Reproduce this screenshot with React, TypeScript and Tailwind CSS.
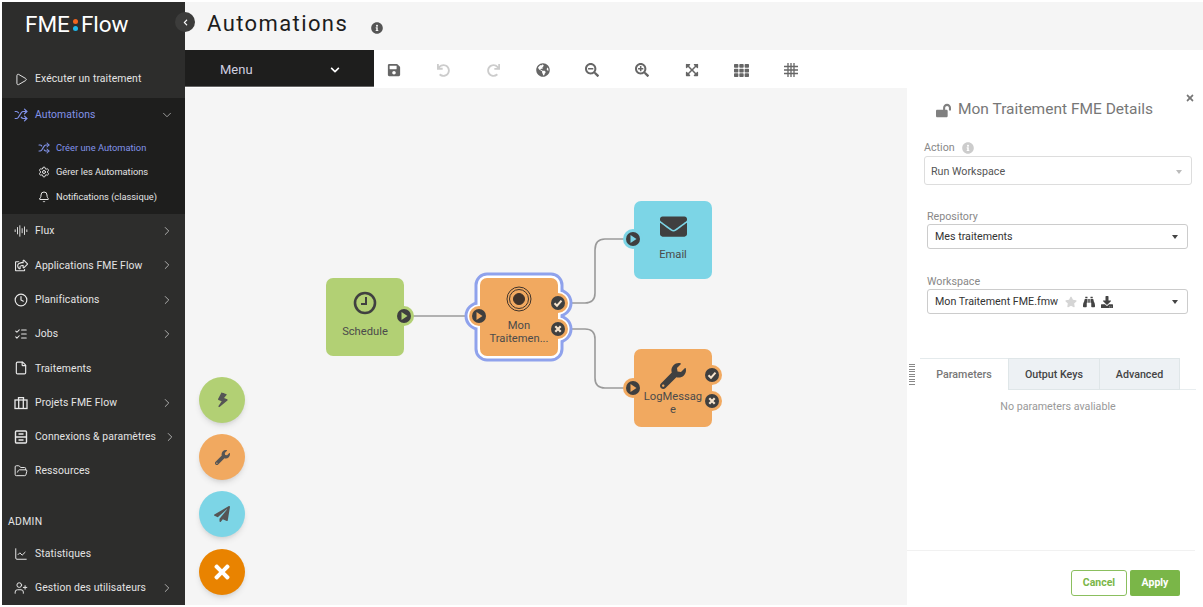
import type { ReactNode } from "react";
import {
  AudioLines,
  Bell,
  ChartLine,
  ChevronDown,
  ChevronRight,
  Clock,
  File,
  FolderOpen,
  ListChecks,
  Play,
  Settings,
  Shuffle,
  UserPlus,
} from "lucide-react";
import {
  FaBinoculars,
  FaBolt,
  FaChevronDown,
  FaChevronLeft,
  FaDownload,
  FaEnvelope,
  FaExpandArrowsAlt,
  FaGlobeAmericas,
  FaInfoCircle,
  FaLockOpen,
  FaPaperPlane,
  FaRedo,
  FaRegShareSquare,
  FaSave,
  FaSearchMinus,
  FaSearchPlus,
  FaStar,
  FaTh,
  FaTimes,
  FaUndo,
  FaWrench,
} from "react-icons/fa";

function DrawersIcon() {
  return (
    <svg width="14" height="14" viewBox="0 0 14 14" fill="none" stroke="currentColor" strokeWidth="1.4">
      <rect x="1.5" y="1" width="11" height="12" rx="1" />
      <path d="M1.5 7h11M4.5 4h5M4.5 10h5" />
    </svg>
  );
}

function ProjectsIcon() {
  return (
    <svg width="14" height="14" viewBox="0 0 14 14" fill="none" stroke="currentColor" strokeWidth="1.3">
      <rect x="1" y="4" width="12" height="8.5" />
      <path d="M4.5 4V1.7h5V4M4.7 4v8.5M9.3 4v8.5" />
    </svg>
  );
}

function GridLinesIcon() {
  return (
    <svg width="16" height="16" viewBox="0 0 16 16" stroke="#666" strokeWidth="1.3" fill="none">
      <path d="M5 1v14M8 1v14M11 1v14M1 4.5h14M1 8h14M1 11.5h14" />
    </svg>
  );
}

type NavItem = {
  label: string;
  icon: ReactNode;
  arrow?: boolean;
};

const topItems: NavItem[] = [
  { label: "Flux", icon: <AudioLines size={14} strokeWidth={1.6} />, arrow: true },
  { label: "Applications FME Flow", icon: <FaRegShareSquare size={13} />, arrow: true },
  { label: "Planifications", icon: <Clock size={14} strokeWidth={2} />, arrow: true },
  { label: "Jobs", icon: <ListChecks size={14} strokeWidth={1.8} />, arrow: true },
  { label: "Traitements", icon: <File size={14} strokeWidth={2} /> },
  { label: "Projets FME Flow", icon: <ProjectsIcon />, arrow: true },
  { label: "Connexions & paramètres", icon: <DrawersIcon />, arrow: true },
  { label: "Ressources", icon: <FolderOpen size={14} strokeWidth={1.7} /> },
];

const adminItems: NavItem[] = [
  { label: "Statistiques", icon: <ChartLine size={14} strokeWidth={1.7} /> },
  { label: "Gestion des utilisateurs", icon: <UserPlus size={14} strokeWidth={1.7} />, arrow: true },
];

function NavRow({ item }: { item: NavItem }) {
  return (
    <div className="flex h-[34.3px] items-center gap-[7px] pl-[12px] pr-[11px] text-[10.4px] tracking-[0.1px] text-[#e4e4e4]">
      <span className="flex w-[14px] shrink-0 justify-center text-[#e8e8e8]">{item.icon}</span>
      <span className="whitespace-nowrap">{item.label}</span>
      {item.arrow && <ChevronRight size={14} strokeWidth={1.6} className="ml-auto shrink-0 text-[#b5b5b5]" />}
    </div>
  );
}

function Sidebar() {
  return (
    <aside className="relative flex w-[183px] shrink-0 flex-col bg-[#2d2d2c]">
      <div className="flex h-[44px] items-center pl-[23px] pt-[2px] text-[22.5px] font-normal leading-none text-white">
        <span>FME</span>
        <span className="mx-[3px] flex flex-col gap-[2px]">
          <span className="h-[5px] w-[5px] rounded-full bg-[#f0641e]" />
          <span className="h-[5px] w-[5px] rounded-full bg-[#1fb6e8]" />
        </span>
        <span>Flow</span>
      </div>
      <div className="mt-[17px]">
        <div className="flex h-[36px] items-center gap-[7px] pb-[2px] pl-[12px] text-[10.4px] tracking-[0.1px] text-[#e4e4e4]">
          <span className="flex w-[14px] justify-center">
            <Play size={15} strokeWidth={1.7} />
          </span>
          Exécuter un traitement
        </div>
        <div className="bg-[#1e1e1d] pb-[5px]">
          <div className="mb-[4.5px] flex h-[33px] items-center gap-[7px] pl-[12px] pr-[11px] text-[10.4px] tracking-[0.1px] text-[#8293ea]">
            <span className="flex w-[14px] justify-center">
              <Shuffle size={14} strokeWidth={2.1} />
            </span>
            Automations
            <ChevronDown size={14} strokeWidth={1.5} className="ml-auto text-[#aaa]" />
          </div>
          <div className="flex h-[24.5px] items-center gap-[6px] pl-[36px] text-[9.3px] text-[#8293ea]">
            <Shuffle size={12} strokeWidth={2.1} />
            Créer une Automation
          </div>
          <div className="flex h-[24.5px] items-center gap-[6px] pl-[36px] text-[9.3px] text-[#e4e4e4]">
            <Settings size={12} strokeWidth={2} />
            Gérer les Automations
          </div>
          <div className="flex h-[24.5px] items-center gap-[6px] pl-[36px] text-[9.3px] text-[#e4e4e4]">
            <Bell size={12} strokeWidth={2} />
            Notifications (classique)
          </div>
        </div>
        {topItems.map((item) => (
          <NavRow key={item.label} item={item} />
        ))}
        <div className="mb-[7px] ml-[6px] mt-[27px] h-[14px] text-[10.4px] leading-[14px] tracking-[0.3px] text-[#e4e4e4]">
          ADMIN
        </div>
        {adminItems.map((item) => (
          <NavRow key={item.label} item={item} />
        ))}
      </div>
      <button className="absolute right-[-10px] top-[10px] z-10 flex h-[20px] w-[20px] items-center justify-center rounded-full bg-[#3c3c3b] text-white">
        <FaChevronLeft size={7} />
      </button>
    </aside>
  );
}

function Toolbar() {
  return (
    <div className="flex h-[38px] bg-white">
      <div className="flex h-[37px] w-[189px] items-center justify-between border-b border-[#666] bg-[#1e1e1d] pl-[35px] pr-[34px] pt-[3px] text-[13px] text-[#cfcfe0]">
        Menu
        <FaChevronDown size={10} className="text-white" />
      </div>
      <div className="flex h-[37px] items-center gap-[33.6px] pl-[12px] pt-[3px] text-[#666]">
        <span className="flex w-[16px] justify-center"><FaSave size={14} /></span>
        <span className="flex w-[16px] justify-center text-[#ccc]"><FaUndo size={13} /></span>
        <span className="flex w-[16px] justify-center text-[#ccc]"><FaRedo size={13} /></span>
        <span className="flex w-[16px] justify-center"><FaGlobeAmericas size={14} /></span>
        <span className="flex w-[16px] justify-center"><FaSearchMinus size={14} /></span>
        <span className="flex w-[16px] justify-center"><FaSearchPlus size={14} /></span>
        <span className="flex w-[16px] justify-center"><FaExpandArrowsAlt size={14} /></span>
        <span className="flex w-[16px] justify-center"><FaTh size={15} /></span>
        <span className="flex w-[16px] justify-center"><GridLinesIcon /></span>
      </div>
    </div>
  );
}

// ports are drawn centred on the node edge, halo in the colour of the node
function Port({ kind, color, className }: { kind: "play" | "check" | "cross"; color: string; className: string }) {
  return (
    <svg width="20" height="20" viewBox="0 0 20 20" className={`absolute ${className}`}>
      <circle cx="10" cy="10" r="10" fill={color} />
      <circle cx="10" cy="10" r="7" fill="#3f3f3f" />
      {kind === "play" && <path d="M7.5 6l6 4-6 4z" fill={color} />}
      {kind === "check" && (
        <path d="M6.5 10.2l2.5 2.5 4.5-5" fill="none" stroke="#f6e3cc" strokeWidth="2" />
      )}
      {kind === "cross" && (
        <path d="M7.3 7.3l5.4 5.4M12.7 7.3l-5.4 5.4" fill="none" stroke="#f6e3cc" strokeWidth="2.2" />
      )}
    </svg>
  );
}

const green = "#b2d074";
const orange = "#f1a960";
const blue = "#7cd5e6";

function FlowNode({
  label,
  color,
  icon,
  iconClassName,
  className,
  children,
}: {
  label: ReactNode;
  color: string;
  icon: ReactNode;
  iconClassName: string;
  className: string;
  children: ReactNode;
}) {
  return (
    <div
      className={`absolute flex h-[78px] w-[78px] flex-col items-center rounded-[7px] text-center text-[11.2px] leading-[13px] text-[#4b4b4b] ${className}`}
      style={{ backgroundColor: color }}
    >
      <div className={`flex items-center ${iconClassName}`}>{icon}</div>
      <div className="w-full break-all px-[9px]">{label}</div>
      {children}
    </div>
  );
}

function Canvas() {
  return (
    <div className="relative flex-1 overflow-hidden bg-[#f5f5f5]">
      {/* connectors + selection outline */}
      <svg className="absolute inset-0" width="722" height="517" fill="none">
        <path d="M224 228H290" stroke="#9a9a9a" strokeWidth="1.6" />
        <path d="M375 215H400Q410 215 410 205V162Q410 151 420 151H445" stroke="#9a9a9a" strokeWidth="1.6" />
        <path d="M375 241H400Q410 241 410 251V290Q410 300 420 300H445" stroke="#9a9a9a" strokeWidth="1.6" />
        <g stroke="#8fa2ec" strokeWidth="11" fill="#8fa2ec">
          <rect x="295" y="190" width="78" height="78" rx="7" />
          <circle cx="294" cy="228" r="9" />
          <circle cx="373" cy="215" r="9" />
          <circle cx="373" cy="241" r="9" />
        </g>
        <g stroke="#ffffff" strokeWidth="5" fill="#ffffff">
          <rect x="295" y="190" width="78" height="78" rx="7" />
          <circle cx="294" cy="228" r="9" />
          <circle cx="373" cy="215" r="9" />
          <circle cx="373" cy="241" r="9" />
        </g>
      </svg>

      <FlowNode
        label="Schedule"
        color={green}
        className="left-[141px] top-[190px]"
        iconClassName="h-[47px] pt-[3px]"
        icon={
          <svg width="24" height="24" viewBox="0 0 24 24" fill="none" stroke="#404040" strokeWidth="2.6">
            <circle cx="12" cy="12" r="10" />
            <path d="M13 6v7H8" strokeWidth="2" />
          </svg>
        }
      >
        <Port kind="play" color={green} className="right-[-10px] top-[28px]" />
      </FlowNode>

      <FlowNode
        label={<span className="-mx-[4px] block whitespace-nowrap">Mon<br />Traitemen...</span>}
        color={orange}
        className="left-[295px] top-[190px]"
        iconClassName="h-[41px]"
        icon={
          <svg width="26" height="26" viewBox="0 0 26 26" fill="none" stroke="#40332a">
            <circle cx="13" cy="13" r="12" strokeWidth="1" />
            <circle cx="13" cy="13" r="9.5" strokeWidth="1" />
            <circle cx="13" cy="13" r="5.5" fill="#40332a" />
          </svg>
        }
      >
        <Port kind="play" color={orange} className="left-[-11px] top-[28px]" />
        <Port kind="check" color={orange} className="right-[-10px] top-[15px]" />
        <Port kind="cross" color={orange} className="right-[-10px] top-[41px]" />
      </FlowNode>

      <FlowNode
        label="Email"
        color={blue}
        className="left-[449px] top-[113px]"
        iconClassName="h-[47px] pt-[3px]"
        icon={<FaEnvelope size={27} className="text-[#404040]" />}
      >
        <Port kind="play" color={blue} className="left-[-11px] top-[28px]" />
      </FlowNode>

      <FlowNode
        label="LogMessage"
        color={orange}
        className="left-[449px] top-[261px]"
        iconClassName="h-[41px] pt-[12px]"
        icon={<FaWrench size={26} className="text-[#404040]" />}
      >
        <Port kind="play" color={orange} className="left-[-11px] top-[29px]" />
        <Port kind="check" color={orange} className="right-[-10px] top-[16px]" />
        <Port kind="cross" color={orange} className="right-[-10px] top-[42px]" />
      </FlowNode>

      <div className="absolute left-[14px] top-[289px] flex flex-col gap-[11px]">
        <div className="flex h-[46px] w-[46px] items-center justify-center rounded-full bg-[#b2d074] text-[#555] shadow-md">
          <FaBolt size={15} className="rotate-[20deg]" />
        </div>
        <div className="flex h-[46px] w-[46px] items-center justify-center rounded-full bg-[#f1a960] text-[#555] shadow-md">
          <FaWrench size={15} />
        </div>
        <div className="flex h-[46px] w-[46px] items-center justify-center rounded-full bg-[#7cd5e6] text-[#555] shadow-md">
          <FaPaperPlane size={16} />
        </div>
        <div className="mt-[1px] flex h-[46px] w-[46px] items-center justify-center rounded-full bg-[#e98300] text-white shadow-md">
          <FaTimes size={22} />
        </div>
      </div>
    </div>
  );
}

function Caret({ light }: { light?: boolean }) {
  return (
    <span
      className={`ml-auto h-0 w-0 border-x-[3.5px] border-t-[4px] border-x-transparent ${
        light ? "border-t-[#bbb]" : "border-t-[#444]"
      }`}
    />
  );
}

function DetailsPanel() {
  return (
    <div className="relative flex w-[296px] shrink-0 flex-col bg-white text-[10.7px]">
      <FaTimes size={10} className="absolute left-[278px] top-[5px] text-[#777]" />
      <div className="mt-[12px] flex h-[20px] items-center pl-[29px] text-[15.5px] text-[#777]">
        <FaLockOpen size={15} className="mr-[7px] text-[#808080]" />
        Mon Traitement FME Details
      </div>

      <div className="ml-[17px] mt-[20px] w-[268px]">
        <div className="mb-[2px] flex h-[14px] items-center gap-[7px] pt-[2px] text-[#888]">
          Action
          <FaInfoCircle size={12} className="text-[#ccc]" />
        </div>
        <div className="flex h-[29px] items-center rounded-[3px] border border-[#ddd] pl-[6px] pr-[9px] pt-[3px] text-[#555]">
          Run Workspace
          <Caret light />
        </div>
      </div>

      <div className="ml-[20px] mt-[24px] w-[261px]">
        <div className="mb-[1px] h-[14px] leading-[16px] text-[#888]">Repository</div>
        <div className="flex h-[25px] items-center rounded-[3px] border border-[#ccc] pl-[7px] pr-[9px] pt-[1px] text-[#333]">
          Mes traitements
          <Caret />
        </div>
      </div>

      <div className="ml-[20px] mt-[25px] w-[261px]">
        <div className="mb-[1px] h-[14px] leading-[16px] text-[#888]">Workspace</div>
        <div className="flex h-[25px] items-center rounded-[3px] border border-[#ccc] pl-[7px] pr-[9px] pt-[1px] text-[#333]">
          Mon Traitement FME.fmw
          <FaStar size={12} className="ml-[7px] text-[#d5d5d5]" />
          <FaBinoculars size={12} className="ml-[6px] text-[#444]" />
          <FaDownload size={12} className="ml-[6px] text-[#444]" />
          <Caret />
        </div>
      </div>

      <div className="mt-[44px] flex h-[32px] w-[289px] items-stretch pl-[2px]">
        <div className="mr-[5px] mt-[6px] h-[22px] w-[6px] bg-[repeating-linear-gradient(#888_0_1px,transparent_1px_2.5px)]" />
        <div className="flex w-[88px] items-center justify-center border-t border-[#e4eaec] pt-[2px] font-medium text-[#777]">
          Parameters
        </div>
        <div className="flex w-[92px] items-center justify-center border-x border-y border-[#dfe6e8] bg-[#edf1f4] pt-[2px] font-medium text-[#444]">
          Output Keys
        </div>
        <div className="flex w-[80px] items-center justify-center border-y border-r border-[#dfe6e8] bg-[#edf1f4] pt-[2px] font-medium text-[#444]">
          Advanced
        </div>
        <div className="flex-1 border-b border-[#e8edef]" />
      </div>

      <div className="mt-[10px] w-[302px] text-center leading-[14px] text-[#999]">No parameters avaliable</div>

      <div className="flex-1" />
      <div className="flex h-[55px] w-[288px] justify-end gap-[3px] border-t border-[#f1f1f1] pr-[15px] pt-[19px]">
        <button className="h-[26px] w-[56px] rounded-[3px] border border-[#8bbf5f] bg-white text-[10.5px] font-bold text-[#7ab648]">
          Cancel
        </button>
        <button className="h-[26px] w-[50px] rounded-[2px] bg-[#7ab648] text-[10.5px] font-bold text-white">
          Apply
        </button>
      </div>
    </div>
  );
}

export default function App() {
  return (
    <div className="flex h-[607px] w-[1203px] overflow-hidden bg-white pb-[2px] pl-[2px] pt-[2px] font-['Roboto',sans-serif]">
      <Sidebar />
      <main className="flex min-w-0 flex-1 flex-col">
        <header className="flex h-[48px] items-center bg-[#f5f5f5] pl-[22px]">
          <h1 className="pb-[5px] text-[22px] tracking-[1.4px] text-[#1d1d1d]">Automations</h1>
          <FaInfoCircle size={12} className="ml-[23px] mt-[3px] text-[#555]" />
        </header>
        <Toolbar />
        <div className="flex min-h-0 flex-1">
          <Canvas />
          <DetailsPanel />
        </div>
      </main>
    </div>
  );
}
